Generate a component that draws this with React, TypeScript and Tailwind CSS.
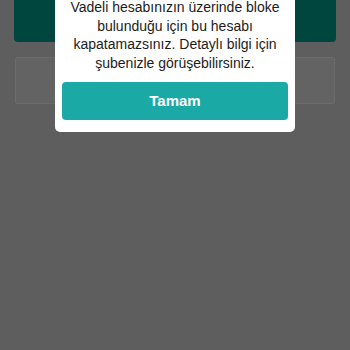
export default function App() {
  return (
    <div className="relative h-[350px] w-[350px] overflow-hidden bg-[#5e5e5e] font-['Liberation_Sans',Arial,sans-serif]">
      {/* Dimmed page behind the alert */}
      <div className="flex flex-col px-[14px]">
        <div className="-mt-[8px] h-[50px] rounded-[4px] bg-[#00463f]" />
        <div className="mx-px mt-[15px] h-[47px] rounded-[2px] border border-[#6b6b6b] bg-[#636363]" />
      </div>

      {/* Alert */}
      <div className="absolute left-1/2 top-[-12px] w-[240px] -translate-x-1/2 rounded-[5px] bg-white px-[7px] pb-[12px] pt-[10px]">
        <p className="whitespace-nowrap text-center text-[14px] leading-[18.7px] text-[#1c1c1c]">
          Vadeli hesabınızın üzerinde bloke
          <br />
          bulunduğu için bu hesabı
          <br />
          kapatamazsınız. Detaylı bilgi için
          <br />
          şubenizle görüşebilirsiniz.
        </p>
        <button
          type="button"
          className="mt-[9px] flex h-[38px] w-full items-center justify-center rounded-[4px] bg-[#1ba9a6] text-[15px] font-bold text-white"
        >
          Tamam
        </button>
      </div>
    </div>
  );
}
